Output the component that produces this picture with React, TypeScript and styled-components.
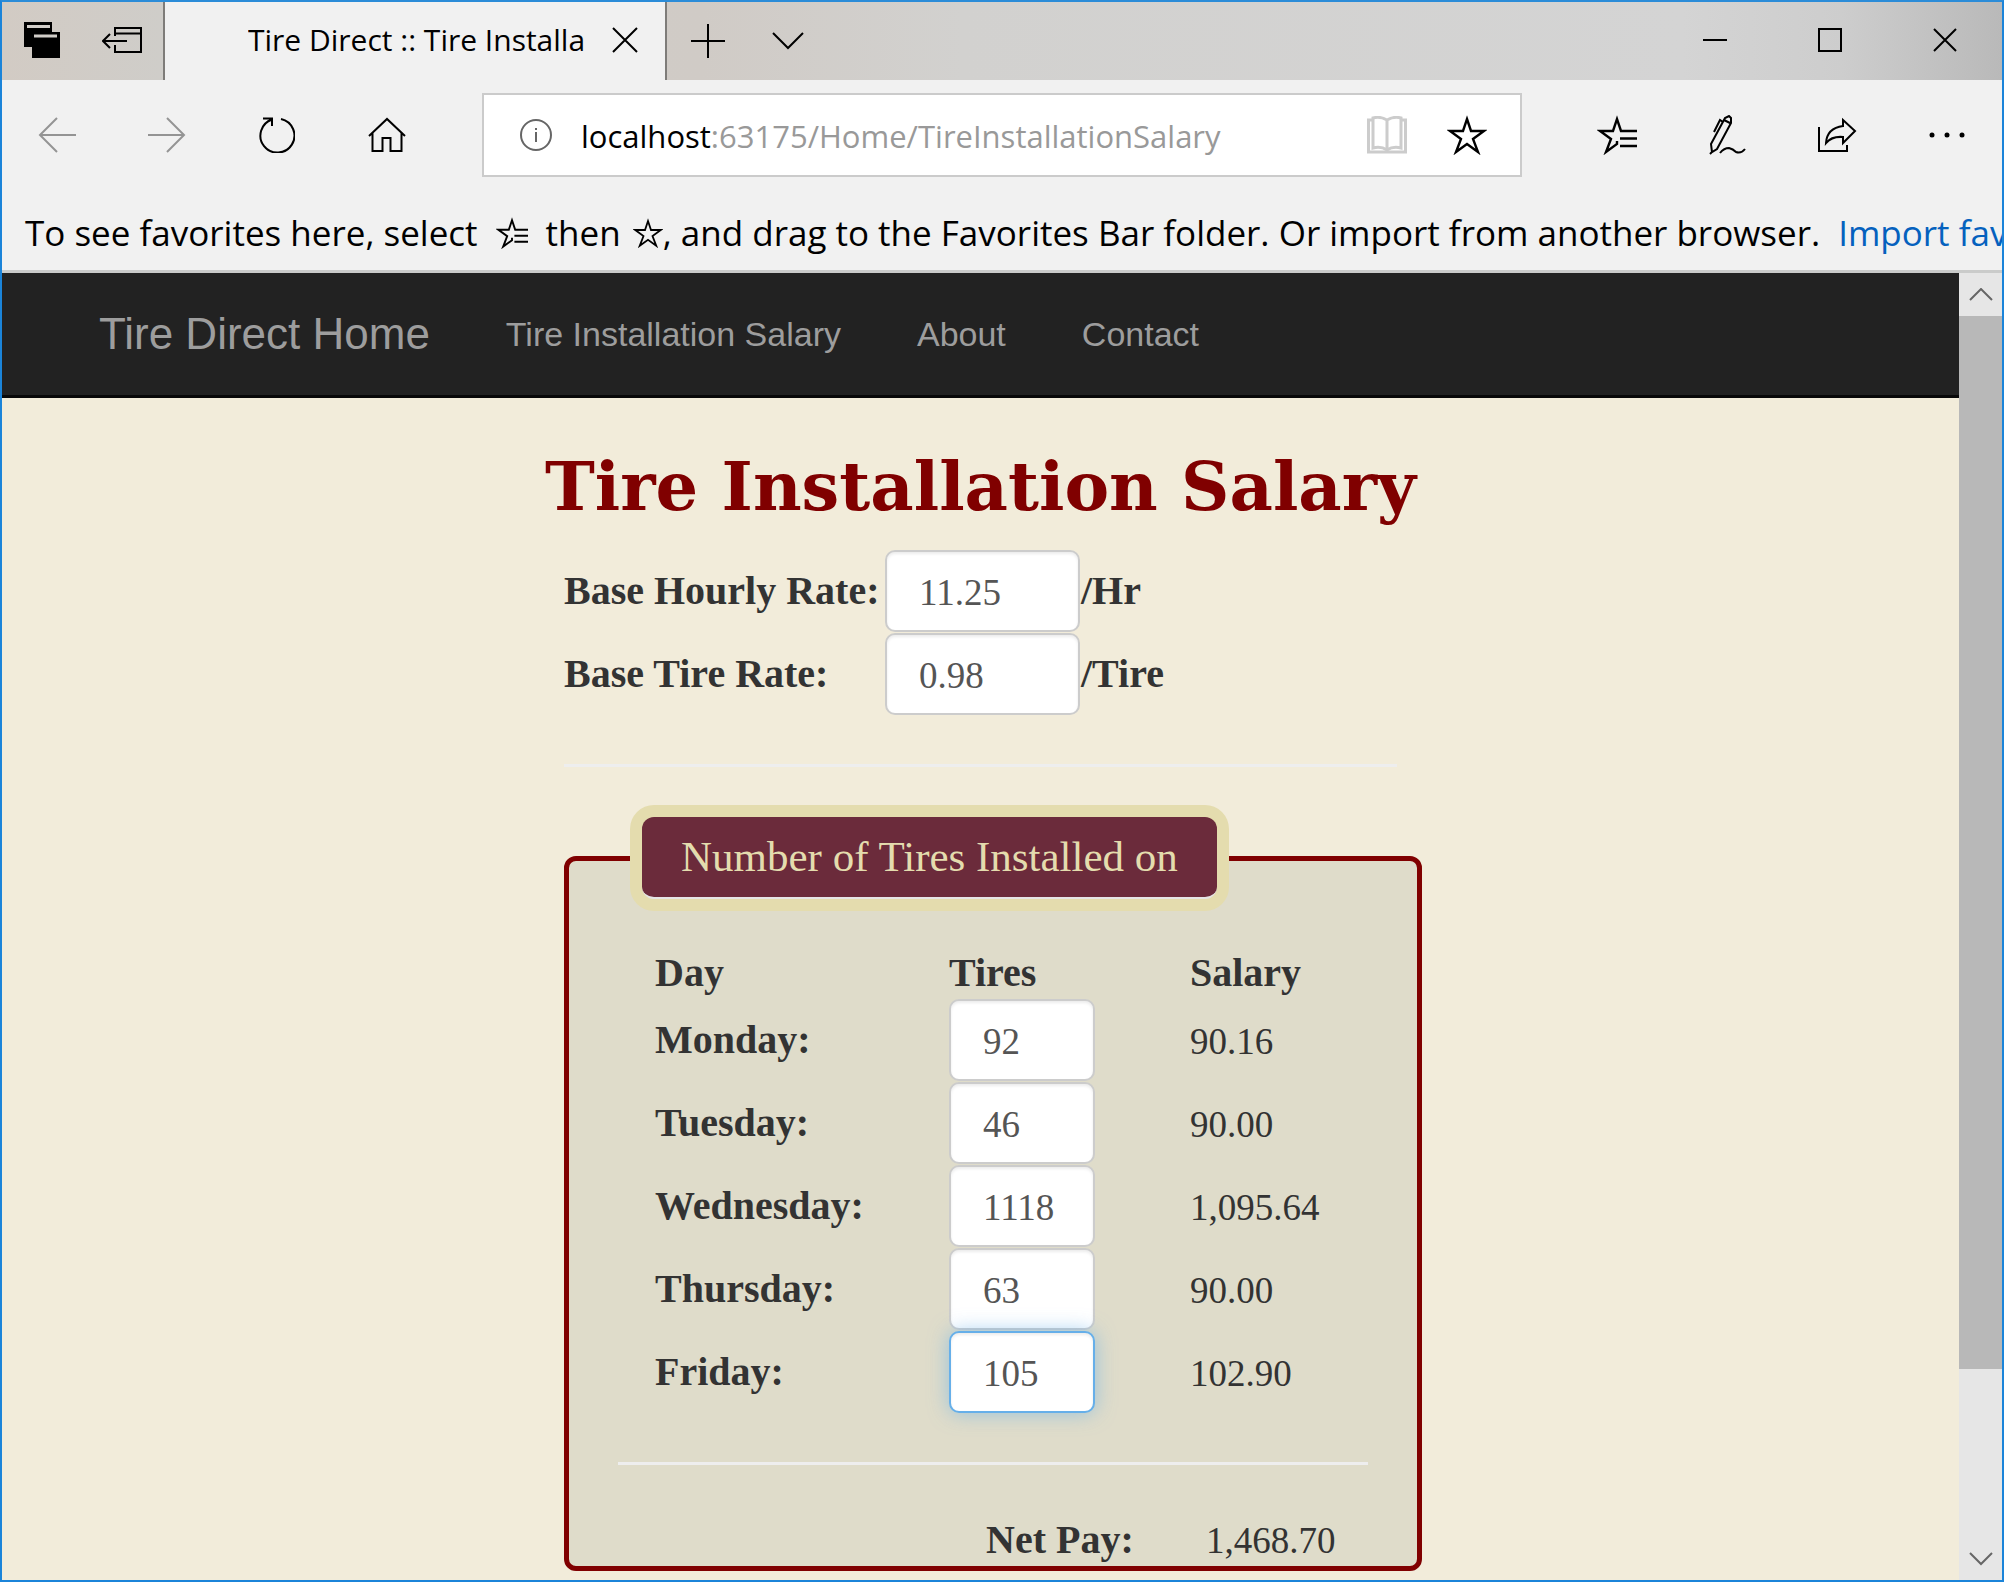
import React, { useState } from "react";
import styled, { createGlobalStyle } from "styled-components";

const uiFont = `"Segoe UI", "Open Sans", "Noto Sans", sans-serif`;
const navFont = `Arial, "Liberation Sans", sans-serif`;
const textFont = `Georgia, "Liberation Serif", serif`;
const titleFont = `Georgia, "DejaVu Serif", serif`;

const GlobalStyle = createGlobalStyle`
  *, *::before, *::after { box-sizing: border-box; }
  body { margin: 0; background: #f2ecda; }
  button { border: 0; padding: 0; background: none; color: inherit; font: inherit; }
`;

/* ---------- browser window ---------- */

const Window = styled.div`
  display: flex;
  flex-direction: column;
  min-height: 100vh;
  border: 2px solid #1b84d9;
  border-top-color: #2b8cd8;
  background: #f2ecda;
  overflow: hidden;
`;

const TabBar = styled.header`
  display: flex;
  height: 78px;
  font-family: ${uiFont};
  background: linear-gradient(90deg, #d2cbc4 0%, #cfcdc9 8%, #d0cbc6 35%, #d2d1cf 48%, #d4d4d4 84%, #cdcdcd 92%, #b9b9b9 100%);
`;

const TabTools = styled.div`
  display: flex;
  align-items: center;
  gap: 42px;
  width: 163px;
  padding: 0 0 2px 22px;
  border-right: 2px solid #7e7c79;
`;

const IconButton = styled.button<{ $width?: number; $muted?: boolean }>`
  display: flex;
  align-items: center;
  justify-content: center;
  flex: none;
  width: ${(p) => (p.$width ? `${p.$width}px` : "auto")};
  color: ${(p) => (p.$muted ? "#949494" : "#000")};
`;

const Tab = styled.div`
  display: flex;
  align-items: center;
  justify-content: space-between;
  width: 502px;
  padding: 0 27px 2px 83px;
  border-right: 2px solid #7e7c79;
  background: #f1f1f1;
`;

const TabTitle = styled.span`
  overflow: hidden;
  white-space: nowrap;
  font-size: 30px;
  line-height: 44px;
`;

const TabActions = styled.div`
  display: flex;
  flex: 1;
  padding-left: 1px;
`;

const WindowControls = styled.div`
  display: flex;
  padding-bottom: 2px;
`;

const Toolbar = styled.div`
  display: flex;
  align-items: center;
  height: 110px;
  background: #f1f1f1;
  font-family: ${uiFont};
`;

const NavButtons = styled.div`
  display: flex;
  flex: none;
`;

const AddressBox = styled.div`
  display: flex;
  align-items: center;
  flex: 1;
  min-width: 0;
  height: 84px;
  margin: 0 40px;
  padding: 0 33px 0 36px;
  border: 2px solid #cbcbcb;
  background: #fff;
`;

const Url = styled.span`
  flex: 1;
  margin-left: 29px;
  padding-top: 2px;
  color: #999;
  font-size: 31px;
  line-height: 44px;
  white-space: nowrap;

  b {
    color: #000;
    font-weight: 400;
  }
`;

const AddressActions = styled.span`
  display: flex;
  align-items: center;
  gap: 40px;
`;

const FavoritesBar = styled.div`
  display: flex;
  align-items: center;
  height: 83px;
  padding: 8px 0 2px 23px;
  border-bottom: 3px solid #cacbca;
  background: #f1f1f1;
  font-family: ${uiFont};
  font-size: 35px;
  line-height: 48px;
  white-space: nowrap;

  svg { flex: none; }
`;

const BarText = styled.span<{ $before?: number; $after?: number }>`
  margin-left: ${(p) => p.$before ?? 0}px;
  margin-right: ${(p) => p.$after ?? 0}px;
`;

const ImportLink = styled.a`
  margin-left: 18px;
  color: #0561be;
  text-decoration: none;
`;

const Viewport = styled.div`
  display: flex;
  flex: 1;
`;

const Page = styled.div`
  flex: 1;
  min-width: 0;
`;

const Scrollbar = styled.div`
  display: flex;
  flex-direction: column;
  flex: none;
  width: 43px;
  background: #e6e6e6;
  color: #666;
`;

const ScrollButton = styled.button`
  display: flex;
  align-items: center;
  justify-content: center;
  height: 43px;
`;

const ScrollTrack = styled.div`
  display: flex;
  flex-direction: column;
  flex: 1;
`;

const ScrollThumb = styled.div`
  height: calc(86% + 3px);
  background: #b8b8b8;
`;

/* ---------- site ---------- */

const SiteNav = styled.nav`
  display: flex;
  align-items: center;
  height: 125px;
  padding-left: 59px;
  border-bottom: 3px solid #080808;
  background: #222;
  font-family: ${navFont};
`;

const NavLink = styled.a<{ $brand?: boolean }>`
  padding: 0 38px;
  color: #9d9d9d;
  font-size: ${(p) => (p.$brand ? 44 : 34)}px;
  line-height: 122px;
  text-decoration: none;
  white-space: nowrap;
`;

const Main = styled.main`
  max-width: 833px;
  margin: 0 auto;
  color: #333;
  font-family: ${textFont};
  font-size: 37px;
  line-height: 50px;
`;

const Title = styled.h1`
  display: flex;
  justify-content: center;
  margin: 50px 0 23px;
  color: maroon;
  font: 700 67px/78px ${titleFont};
  white-space: nowrap;
`;

const Table = styled.table<{ $inset?: boolean }>`
  margin-left: ${(p) => (p.$inset ? 37 : 0)}px;
  border-collapse: collapse;
  table-layout: fixed;

  th, td { padding: 0; text-align: left; white-space: nowrap; }
  th { font: 700 40px/50px ${textFont}; }
`;

const Column = styled.col<{ $width: number }>`
  width: ${(p) => p.$width}px;
`;

const Row = styled.tr`
  height: 83px;
`;

const Amount = styled.span`
  display: block;
  padding-top: 4px;
`;

const Field = styled.input<{ $width: number; $active?: boolean }>`
  display: block;
  position: relative;
  width: ${(p) => p.$width}px;
  height: 82px;
  padding: 4px 16px 0 32px;
  border: 2px solid ${(p) => (p.$active ? "#66afe9" : "#ccc")};
  border-radius: 10px;
  outline: 0;
  background: #fff;
  box-shadow: inset 0 2px 3px rgba(0, 0, 0, 0.08)
    ${(p) => (p.$active ? ", 0 0 20px rgba(102, 175, 233, 0.6)" : "")};
  color: #555;
  font: 400 37px/50px ${textFont};
`;

const Rule = styled.hr`
  height: 3px;
  margin: 49px 0 50px;
  border: 0;
  background: #eee;
`;

const Installed = styled.fieldset`
  margin: 0 -25px 0 0;
  padding: 0 49px;
  border: 5px solid maroon;
  border-radius: 12px;
  background: #dfdcca;
`;

const Legend = styled.legend`
  margin: 0 0 49px 24px;
  padding: 0 39px;
  border-bottom: 2px solid #e5e5e5;
  border-radius: 12px;
  background: #6b2b3b;
  box-shadow: 0 0 0 12px #e4dcae;
  color: #e4dcae;
  font-size: 43px;
  line-height: 80px;
  white-space: nowrap;
`;

const NetPay = styled.div`
  display: grid;
  grid-template-columns: 220px auto;
  align-items: baseline;
  padding-left: 368px;
`;

const NetPayLabel = styled.label`
  font: 700 40px/50px ${textFont};
`;

/* ---------- icons ---------- */

type IconProps = { w: number; h: number; sw?: number; children: React.ReactNode };

const Icon = ({ w, h, sw = 2, children }: IconProps) => (
  <svg width={w} height={h} viewBox={`0 0 ${w} ${h}`} fill="none" stroke="currentColor" strokeWidth={sw} aria-hidden="true">
    {children}
  </svg>
);

const TabsIcon = () => (
  <Icon w={36} h={36}>
    <path d="M0 0H28V10H36V36H8V25H0Z" fill="#000" stroke="none" />
    <path d="M3 4.500H26M10 14H33" stroke="#d2cec9" strokeWidth="3" />
  </Icon>
);

const SetAsideIcon = () => (
  <Icon w={40} h={26}>
    <path d="M13 9V1H39V25H13V18M13 6.500H39" />
    <path d="M25 14H2M8 7L1 14L8 21" />
  </Icon>
);

const CrossIcon = ({ size }: { size: number }) => (
  <Icon w={size} h={size}>
    <path d={`M1 1L${size - 1} ${size - 1}M${size - 1} 1L1 ${size - 1}`} />
  </Icon>
);

const PlusIcon = () => <Icon w={34} h={34}><path d="M17 0V34M0 17H34" /></Icon>;
const ChevronIcon = () => <Icon w={32} h={18}><path d="M1 1L16 16L31 1" /></Icon>;
const BackIcon = () => <Icon w={38} h={36}><path d="M38 18H2M19 1L2 18L19 35" /></Icon>;
const ForwardIcon = () => <Icon w={38} h={36}><path d="M0 18H36M19 1L36 18L19 35" /></Icon>;

const RefreshIcon = () => (
  <Icon w={36} h={36}>
    <path d="M22 2A17 17 0 1 1 13 2.500M4 1.500H13V9" />
  </Icon>
);

const HomeIcon = () => (
  <Icon w={38} h={36}>
    <path d="M1 19L19 2L37 19M4.500 16V34H14.500V21H22.500V34H33.500V16" />
  </Icon>
);

const InfoIcon = () => (
  <Icon w={32} h={32}>
    <circle cx="16" cy="16" r="15" stroke="#666" />
    <path d="M16 13V23M16 9V11" stroke="#666" />
  </Icon>
);

const BookIcon = () => (
  <Icon w={40} h={38}>
    <g stroke="#ccc" strokeWidth="3">
      <path d="M6 4H1.500V36H38.500V4H34" />
      <path d="M20 4Q13 0 6 2V32Q14 30 20 34Q26 30 34 32V2Q27 0 20 4V34" />
    </g>
  </Icon>
);

const StarIcon = ({ size = 40 }: { size?: number }) => (
  <svg width={size} height={size} viewBox="0 0 40 40" fill="none" stroke="currentColor" strokeWidth="2.400" aria-hidden="true">
    <path d="M20 4L24 16H37L26 24L31 37L20 29L9 37L14 24L3 16H16Z" />
  </svg>
);

const HubIcon = ({ size = 40 }: { size?: number }) => (
  <svg width={size} height={size} viewBox="0 0 40 40" fill="none" stroke="currentColor" strokeWidth="2.400" aria-hidden="true">
    <path d="M40 16H24L20 4L16 16H3L14 24L9 37L20 29V26M23 23.500H40M23 31H40" />
  </svg>
);

const PenIcon = () => (
  <Icon w={37} h={40}>
    <path d="M2 29L16 3L20 1L22 3V8L8 34L3 37ZM15 5L21 8M2 29L3 37L1 39" />
    <path d="M14 7L11 5L5 17" />
    <path d="M11 38Q15 33 20 33Q24 34 27 37Q32 39 36 34" />
  </Icon>
);

const ShareIcon = () => (
  <Icon w={40} h={36}>
    <path d="M2 10V34H30V28" />
    <path d="M26 3L38 14L26 26V20Q15 19 9 26Q10 11 26 9Z" />
  </Icon>
);

const MoreIcon = () => (
  <Icon w={36} h={6}>
    <g fill="#000" stroke="none">
      <circle cx="3" cy="3" r="2.500" />
      <circle cx="18" cy="3" r="2.500" />
      <circle cx="33" cy="3" r="2.500" />
    </g>
  </Icon>
);

/* ---------- data ---------- */

const days = [
  { day: "Monday", tires: "92", salary: "90.16" },
  { day: "Tuesday", tires: "46", salary: "90.00" },
  { day: "Wednesday", tires: "1118", salary: "1,095.64" },
  { day: "Thursday", tires: "63", salary: "90.00" },
  { day: "Friday", tires: "105", salary: "102.90" },
];

const rates = [
  { id: "hourly", label: "Base Hourly Rate:", value: "11.25", unit: "/Hr" },
  { id: "tire", label: "Base Tire Rate:", value: "0.98", unit: "/Tire" },
];

const TextField = ({ id, initial, width, active }: { id: string; initial: string; width: number; active?: boolean }) => {
  const [value, setValue] = useState(initial);
  return <Field id={id} $width={width} $active={active} value={value} onChange={(e) => setValue(e.target.value)} />;
};

const Chrome = () => (
  <>
    <TabBar>
      <TabTools>
        <IconButton aria-label="Tabs you've set aside"><TabsIcon /></IconButton>
        <IconButton aria-label="Set these tabs aside"><SetAsideIcon /></IconButton>
      </TabTools>
      <Tab>
        <TabTitle>Tire Direct :: Tire Installa</TabTitle>
        <IconButton aria-label="Close tab"><CrossIcon size={26} /></IconButton>
      </Tab>
      <TabActions>
        <IconButton $width={80} aria-label="New tab"><PlusIcon /></IconButton>
        <IconButton $width={80} aria-label="Show tab previews"><ChevronIcon /></IconButton>
      </TabActions>
      <WindowControls>
        <IconButton $width={115} aria-label="Minimize"><Icon w={24} h={24}><path d="M0 12H24" /></Icon></IconButton>
        <IconButton $width={115} aria-label="Maximize"><Icon w={24} h={24}><path d="M1 1H23V23H1Z" /></Icon></IconButton>
        <IconButton $width={115} aria-label="Close"><CrossIcon size={24} /></IconButton>
      </WindowControls>
    </TabBar>
    <Toolbar>
      <NavButtons>
        <IconButton $width={110} $muted aria-label="Back"><BackIcon /></IconButton>
        <IconButton $width={110} $muted aria-label="Forward"><ForwardIcon /></IconButton>
        <IconButton $width={110} aria-label="Refresh"><RefreshIcon /></IconButton>
        <IconButton $width={110} aria-label="Home"><HomeIcon /></IconButton>
      </NavButtons>
      <AddressBox>
        <InfoIcon />
        <Url><b>localhost</b>:63175/Home/TireInstallationSalary</Url>
        <AddressActions>
          <IconButton aria-label="Reading view"><BookIcon /></IconButton>
          <IconButton aria-label="Add to favorites"><StarIcon /></IconButton>
        </AddressActions>
      </AddressBox>
      <NavButtons>
        <IconButton $width={110} aria-label="Hub"><HubIcon /></IconButton>
        <IconButton $width={110} aria-label="Add notes"><PenIcon /></IconButton>
        <IconButton $width={110} aria-label="Share"><ShareIcon /></IconButton>
        <IconButton $width={110} aria-label="Settings and more"><MoreIcon /></IconButton>
      </NavButtons>
    </Toolbar>
    <FavoritesBar>
      <BarText $after={18}>To see favorites here, select</BarText>
      <HubIcon size={32} />
      <BarText $before={18} $after={12}>then</BarText>
      <StarIcon size={30} />
      <BarText>, and drag to the Favorites Bar folder. Or import from another browser.</BarText>
      <ImportLink href="#import">Import fav</ImportLink>
    </FavoritesBar>
  </>
);

export default function App() {
  return (
    <Window>
      <GlobalStyle />
      <Chrome />
      <Viewport>
        <Page>
          <SiteNav>
            <NavLink $brand href="#home">Tire Direct Home</NavLink>
            <NavLink href="#salary">Tire Installation Salary</NavLink>
            <NavLink href="#about">About</NavLink>
            <NavLink href="#contact">Contact</NavLink>
          </SiteNav>
          <Main>
            <Title>Tire Installation Salary</Title>
            <Table>
              <colgroup>
                <Column $width={321} />
                <Column $width={196} />
                <Column $width={200} />
              </colgroup>
              <tbody>
                {rates.map((r) => (
                  <Row key={r.id}>
                    <th scope="row"><label htmlFor={r.id}>{r.label}</label></th>
                    <td><TextField id={r.id} initial={r.value} width={195} /></td>
                    <th>{r.unit}</th>
                  </Row>
                ))}
              </tbody>
            </Table>
            <Rule />
            <Installed>
              <Legend>Number of Tires Installed on</Legend>
              <Table $inset>
                <colgroup>
                  <Column $width={294} />
                  <Column $width={241} />
                  <Column $width={160} />
                </colgroup>
                <thead>
                  <tr><th>Day</th><th>Tires</th><th>Salary</th></tr>
                </thead>
                <tbody>
                  {days.map((d) => (
                    <Row key={d.day}>
                      <th scope="row"><label htmlFor={d.day}>{d.day}:</label></th>
                      <td><TextField id={d.day} initial={d.tires} width={146} active={d.day === "Friday"} /></td>
                      <td><Amount>{d.salary}</Amount></td>
                    </Row>
                  ))}
                </tbody>
              </Table>
              <Rule />
              <NetPay>
                <NetPayLabel htmlFor="net-pay">Net Pay:</NetPayLabel>
                <output id="net-pay">1,468.70</output>
              </NetPay>
            </Installed>
          </Main>
        </Page>
        <Scrollbar>
          <ScrollButton aria-label="Scroll up"><Icon w={24} h={14}><path d="M1 12L12 1L23 12" /></Icon></ScrollButton>
          <ScrollTrack><ScrollThumb /></ScrollTrack>
          <ScrollButton aria-label="Scroll down"><Icon w={24} h={14}><path d="M1 1L12 12L23 1" /></Icon></ScrollButton>
        </Scrollbar>
      </Viewport>
    </Window>
  );
}
